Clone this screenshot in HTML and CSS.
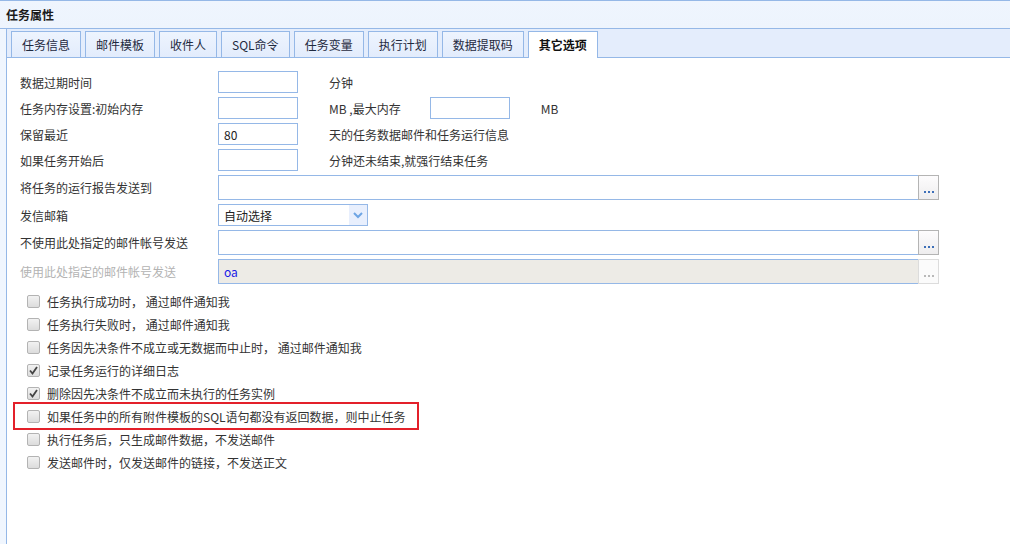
FILE: index.html
```html
<!DOCTYPE html>
<html lang="zh">
<head>
    <meta charset="UTF-8">
    <title>任务属性</title>
    <link rel="stylesheet" href="styles.css">
</head>
<body>
    <div class="panel">
        <div class="panelHeader">任务属性</div>
        <div class="panelBody">
            <div class="tabs">
                <div class="tabsHeader">
                    <div class="tab">任务信息</div>
                    <div class="tab">邮件模板</div>
                    <div class="tab">收件人</div>
                    <div class="tab">SQL命令</div>
                    <div class="tab">任务变量</div>
                    <div class="tab">执行计划</div>
                    <div class="tab">数据提取码</div>
                    <div class="tab selected">其它选项</div>
                </div>
                <div class="tabBody">
                    <div class="form">
                        <div class="label">数据过期时间</div>
                        <div class="ctrl">
                            <input class="box short" type="text">
                            <span class="after">分钟</span>
                        </div>

                        <div class="label">任务内存设置:初始内存</div>
                        <div class="ctrl">
                            <input class="box short" type="text">
                            <span class="after">MB ,最大内存</span>
                            <input class="box short second" type="text">
                            <span class="unit">MB</span>
                        </div>

                        <div class="label">保留最近</div>
                        <div class="ctrl">
                            <input class="box short" type="text" value="80">
                            <span class="after">天的任务数据邮件和任务运行信息</span>
                        </div>

                        <div class="label">如果任务开始后</div>
                        <div class="ctrl">
                            <input class="box short" type="text">
                            <span class="after">分钟还未结束,就强行结束任务</span>
                        </div>

                        <div class="label">将任务的运行报告发送到</div>
                        <div class="ctrl tall">
                            <input class="box long" type="text">
                            <button class="more"><span></span><span></span><span></span></button>
                        </div>

                        <div class="label">发信邮箱</div>
                        <div class="ctrl">
                            <div class="combo">
                                <span class="comboText">自动选择</span>
                                <span class="comboArrow">
                                    <svg width="10" height="7" viewBox="0 0 10 7"><path d="M1 1 L5 5 L9 1" fill="none" stroke="#6ea5e4" stroke-width="2"/></svg>
                                </span>
                            </div>
                        </div>

                        <div class="label">不使用此处指定的邮件帐号发送</div>
                        <div class="ctrl tall">
                            <input class="box long" type="text">
                            <button class="more"><span></span><span></span><span></span></button>
                        </div>

                        <div class="label disabled">使用此处指定的邮件帐号发送</div>
                        <div class="ctrl tall">
                            <input class="box long off" type="text" value="oa" disabled>
                            <button class="more off" disabled><span></span><span></span><span></span></button>
                        </div>
                    </div>

                    <div class="checks">
                        <div class="check"><span class="cb"></span>任务执行成功时， 通过邮件通知我</div>
                        <div class="check"><span class="cb"></span>任务执行失败时， 通过邮件通知我</div>
                        <div class="check"><span class="cb"></span>任务因先决条件不成立或无数据而中止时， 通过邮件通知我</div>
                        <div class="check"><span class="cb on"><svg width="9" height="9" viewBox="0 0 9 9"><path d="M1 4.5 L3.5 7.5 L8 1" fill="none" stroke="#444" stroke-width="1.8"/></svg></span>记录任务运行的详细日志</div>
                        <div class="check"><span class="cb on"><svg width="9" height="9" viewBox="0 0 9 9"><path d="M1 4.5 L3.5 7.5 L8 1" fill="none" stroke="#444" stroke-width="1.8"/></svg></span>删除因先决条件不成立而未执行的任务实例</div>
                        <div class="check marked"><span class="cb"></span>如果任务中的所有附件模板的SQL语句都没有返回数据，则中止任务</div>
                        <div class="check"><span class="cb"></span>执行任务后，只生成邮件数据，不发送邮件</div>
                        <div class="check"><span class="cb"></span>发送邮件时，仅发送邮件的链接，不发送正文</div>
                    </div>
                </div>
            </div>
        </div>
    </div>
</body>
</html>
```

FILE: styles.css
```css
html, body {
    margin: 0;
    height: 100%;
}

body {
    font-family: "Noto Sans CJK SC", "Liberation Sans", sans-serif;
    font-size: 12px;
    color: #333;
    background: #fff;
    overflow: hidden;
}

.panel {
    height: 100%;
    border-top: 1px solid #95b8e7;
    display: flex;
    flex-direction: column;
}

.panelHeader {
    height: 27px;
    line-height: 27px;
    padding-left: 6px;
    font-weight: bold;
    color: #1b1b1b;
    background: linear-gradient(to bottom, #eff5fe 0, #edf4fd 100%);
    border-bottom: 1px solid #95b8e7;
}

.panelBody {
    flex: 1;
    padding-left: 6px;
    background: #f0f6fe;
    display: flex;
}

.tabs {
    flex: 1;
    border-left: 1px solid #95b8e7;
    background: #fff;
    display: flex;
    flex-direction: column;
}

.tabsHeader {
    height: 26px;
    padding: 2px 0 0 4px;
    background: #e4edfc;
    border-bottom: 1px solid #95b8e7;
    display: flex;
    gap: 4px;
}

.tab {
    height: 25px;
    line-height: 25px;
    padding: 0 10px;
    border: 1px solid #95b8e7;
    border-bottom: none;
    background: linear-gradient(to bottom, #eef4fe 0, #e2ecfc 100%);
    color: #1f2a3f;
    white-space: nowrap;
}

.tab.selected {
    background: #fff;
    font-weight: bold;
    color: #111;
    height: 26px;
    margin-bottom: -1px;
}

.tabBody {
    flex: 1;
    padding: 13px 0 0 13px;
}

.form {
    display: grid;
    grid-template-columns: 198px auto;
    row-gap: 4px;
    align-items: center;
}

.label {
    white-space: nowrap;
}

.label.disabled {
    color: #b3b3b3;
}

.ctrl {
    display: flex;
    align-items: center;
    height: 22px;
}

.ctrl.tall {
    height: 25px;
}

.box {
    box-sizing: border-box;
    height: 22px;
    border: 1px solid #95b8e7;
    padding: 0 5px;
    font-family: inherit;
    font-size: 12px;
    color: #222;
    outline: none;
    margin: 0;
}

.short {
    width: 80px;
}

.after {
    margin-left: 31px;
    white-space: nowrap;
}

.second {
    margin-left: 29px;
}

.unit {
    margin-left: 31px;
}

.long {
    width: 700px;
    height: 25px;
    border-right: none;
}

.long.off {
    background: #edebe6;
    color: #1a1ae6;
}

.more {
    box-sizing: border-box;
    width: 21px;
    height: 25px;
    margin: 0;
    padding: 8px 0 0 0;
    border: 1px solid #b4b4b4;
    background: linear-gradient(to bottom, #fdfcfd 0, #eeedee 100%);
    display: flex;
    justify-content: center;
    align-items: center;
    gap: 2px;
}

.more span {
    width: 2px;
    height: 2px;
    background: #3d6fb8;
}

.more.off {
    border-color: #dcdcdc;
    background: #fbfbfb;
}

.more.off span {
    background: #b9b9b9;
}

.combo {
    box-sizing: border-box;
    width: 150px;
    height: 22px;
    border: 1px solid #95b8e7;
    display: flex;
    align-items: center;
    background: #fff;
}

.comboText {
    flex: 1;
    padding-left: 5px;
    color: #222;
}

.comboArrow {
    width: 18px;
    height: 20px;
    background: #e8effd;
    display: flex;
    align-items: center;
    justify-content: center;
}

.checks {
    margin-top: 6px;
    padding-left: 7px;
}

.check {
    height: 23px;
    display: flex;
    align-items: center;
    white-space: nowrap;
    position: relative;
}

.cb {
    box-sizing: border-box;
    width: 13px;
    height: 13px;
    margin-right: 7px;
    border: 1px solid #b3b3b3;
    border-radius: 2px;
    background: linear-gradient(to bottom, #f2f2f2 0, #dcdcdc 100%);
    display: flex;
    align-items: center;
    justify-content: center;
}

.marked::after {
    content: "";
    position: absolute;
    left: -14px;
    top: -3px;
    width: 402px;
    height: 24px;
    border: 2px solid #e3202a;
}
```
